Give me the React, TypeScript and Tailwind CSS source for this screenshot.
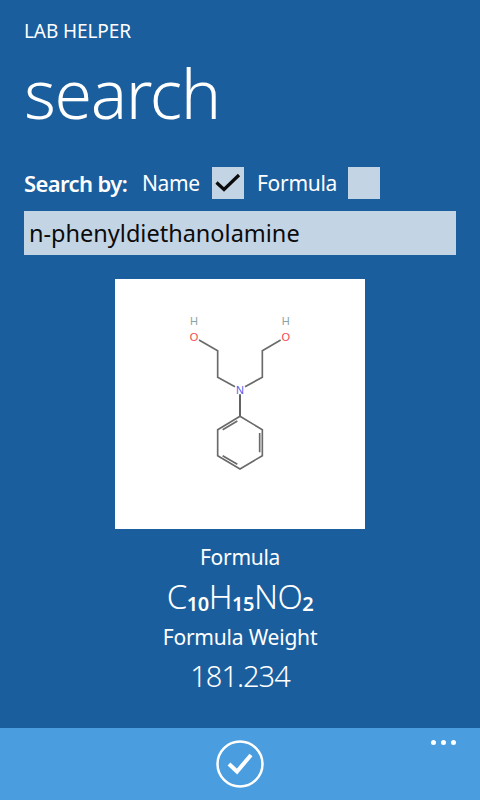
import React from "react";

function Molecule() {
  return (
    <svg viewBox="0 0 750 750" className="w-[250px] h-[250px]">
      <g stroke="#6a6a6a" strokeWidth="5" fill="none">
        <path d="M252 183 L308 215 L308 295 L360 323" />
        <path d="M390 323 L442 295 L442 215 L497 183" />
        <path d="M375 346 L375 412" stroke="#444" />
        <path d="M375 412 L442 452 L442 530 L375 570 L308 530 L308 452 Z" />
        <path d="M434 462 L434 520 M367 556 L323 530 M323 452 L367 426" />
      </g>
      <g fontFamily="'Liberation Sans', sans-serif" fontSize="33" textAnchor="middle">
        <text x="237" y="139" fill="#8aa5a5">H</text>
        <text x="237" y="187" fill="#f5474f">O</text>
        <text x="512" y="139" fill="#8aa5a5">H</text>
        <text x="512" y="187" fill="#f5474f">O</text>
        <text x="375" y="345" fill="#5a5af0">N</text>
      </g>
    </svg>
  );
}

export default function App() {
  return (
    <div className="w-[480px] h-[800px] bg-[#1a5e9d] text-white flex flex-col overflow-hidden font-['Noto_Sans',sans-serif]">
      <div className="flex-1 flex flex-col px-6 min-h-0">
        <div className="h-[26px] mt-[18px] text-[19px] leading-[26px] tracking-[-0.1px]">LAB HELPER</div>
        <div className="h-[86px] mt-[6px] text-[68px] leading-[86px] font-light tracking-[-1.4px]">search</div>
        <div className="mt-[31px] h-[32px] flex items-center">
          <span className="w-[118px] text-[22px] font-semibold tracking-[-0.6px] whitespace-nowrap">Search by:</span>
          <span className="w-[70px] pt-[2px] text-[21px] tracking-[-0.4px]">Name</span>
          <span className="w-[32px] h-[32px] bg-[#c3d4e5] flex items-center justify-center">
            <svg viewBox="0 0 32 32" className="w-[32px] h-[32px]">
              <path d="M4.5 15.5 L12 22.5 L27 8" fill="none" stroke="#0b0b0b" strokeWidth="3.2" />
            </svg>
          </span>
          <span className="ml-[13px] w-[91px] pt-[2px] text-[21px] tracking-[-0.3px]">Formula</span>
          <span className="w-[32px] h-[32px] bg-[#c3d4e5]" />
        </div>
        <div className="mt-[12px] h-[44px] bg-[#c3d4e5] text-[#0b0b0b] text-[23.5px] leading-[44px] pl-[5px]">
          n-phenyldiethanolamine
        </div>
        <div className="mt-[24px] self-center w-[250px] h-[250px] bg-white">
          <Molecule />
        </div>
        <div className="mt-[12px] flex flex-col items-center">
          <div className="h-[32px] text-[21px] leading-[32px] tracking-[-0.3px]">Formula</div>
          <div className="h-[48px] text-[33px] leading-[48px] font-light tracking-[-0.5px]">
            C<span className="relative top-[2px] text-[20px] font-semibold">10</span>H<span className="relative top-[2px] text-[20px] font-semibold">15</span>NO<span className="relative top-[2px] text-[20px] font-semibold">2</span>
          </div>
          <div className="h-[32px] text-[21px] leading-[32px] tracking-[-0.2px]">Formula Weight</div>
          <div className="h-[46px] text-[29px] leading-[46px] font-light tracking-[-1px]">181.234</div>
        </div>
      </div>
      <div className="h-[72px] bg-[#4a9ddf] relative flex justify-center items-center shrink-0">
        <svg viewBox="0 0 48 48" className="w-[48px] h-[48px]">
          <circle cx="24" cy="24" r="22.5" fill="none" stroke="white" strokeWidth="2.5" />
          <path d="M13 24 L21 31.5 L35 15" fill="none" stroke="white" strokeWidth="4" />
        </svg>
        <div className="absolute right-[24px] top-[12px] flex gap-[5px]">
          <span className="w-[5px] h-[5px] rounded-full bg-white" />
          <span className="w-[5px] h-[5px] rounded-full bg-white" />
          <span className="w-[5px] h-[5px] rounded-full bg-white" />
        </div>
      </div>
    </div>
  );
}
